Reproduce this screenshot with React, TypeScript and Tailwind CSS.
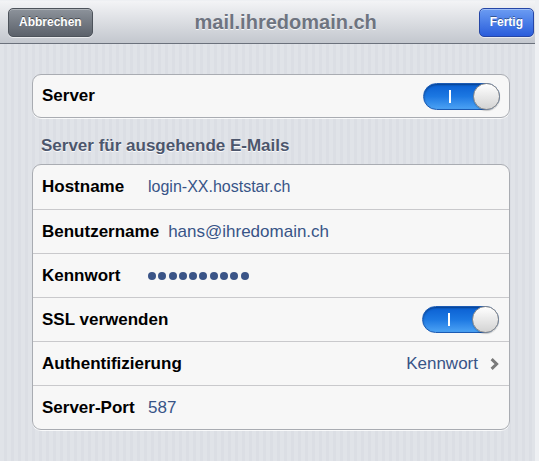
import React from 'react';

const font = "font-['Liberation_Sans',Arial,sans-serif]";

const Toggle = () => (
  <div className="flex h-[27px] w-[77px] items-center rounded-full border border-[#1b5bb4] bg-gradient-to-b from-[#0a5fd2] via-[#1c78e2] to-[#4ba2f4] pl-[25px] shadow-[inset_0_1px_2px_rgba(0,0,0,0.35)]">
    <span className="h-[13px] w-[2px] bg-white" />
    <span className="-mr-px ml-auto h-[27px] w-[27px] rounded-full border border-[#8a8a8a] bg-gradient-to-b from-[#ffffff] to-[#d3d3d3] shadow-[0_1px_1px_rgba(0,0,0,0.2)]" />
  </div>
);

const Chevron = () => (
  <svg width="9" height="12" viewBox="0 0 9 12" className="ml-[12px]">
    <path d="M1.6 1.2 L6.6 6 L1.6 10.8" fill="none" stroke="#7a7a7a" strokeWidth="3" strokeLinejoin="miter" />
  </svg>
);

const Dots = () => (
  <div className="flex gap-[2.3px]">
    {Array.from({ length: 10 }).map((_, i) => (
      <span key={i} className="h-[8px] w-[8px] rounded-full bg-[#3a5487]" />
    ))}
  </div>
);

type Row = {
  label: string;
  value?: React.ReactNode;
  valueClass?: string;
  right?: React.ReactNode;
};

const rows: Row[] = [
  { label: 'Hostname', value: 'login-XX.hoststar.ch', valueClass: 'text-[16px]' },
  { label: 'Benutzername', value: 'hans@ihredomain.ch' },
  { label: 'Kennwort', value: <Dots /> },
  { label: 'SSL verwenden', right: <Toggle /> },
  {
    label: 'Authentifizierung',
    right: (
      <div className="flex items-center">
        <span className="text-[17px] text-[#385487]">Kennwort</span>
        <Chevron />
      </div>
    ),
  },
  { label: 'Server-Port', value: '587' },
];

export default function App() {
  return (
    <div
      className={`${font} h-[461px] w-[539px] overflow-hidden border-r-4 border-t border-[#eef0f3] bg-[repeating-linear-gradient(90deg,#e0e3e8_0px,#e0e3e8_4px,#dbdee4_4px,#dbdee4_7px)]`}
    >
      {/* nav bar */}
      <div className="flex h-[43px] items-center justify-between border-b border-[#6b717c] bg-gradient-to-b from-[#f3f4f6] to-[#c3c7ce] pl-[8px] pr-[1px]">
        <button className="h-[29px] rounded-[5px] border border-[#4d535b] bg-gradient-to-b from-[#8d939b] to-[#5c626b] px-[10px] text-[12px] font-bold text-white shadow-[inset_0_1px_0_rgba(255,255,255,0.3),0_1px_0_rgba(255,255,255,0.6)] [text-shadow:0_-1px_0_rgba(0,0,0,0.45)]">
          Abbrechen
        </button>
        <h1 className="text-[20px] font-bold text-[#6e7480] [text-shadow:0_1px_0_rgba(255,255,255,0.8)]">
          mail.ihredomain.ch
        </h1>
        <button className="h-[29px] rounded-[5px] border border-[#2546a6] bg-gradient-to-b from-[#6c9cf2] to-[#2a5cdb] px-[10px] text-[12px] font-bold text-white shadow-[inset_0_1px_0_rgba(255,255,255,0.35),0_1px_0_rgba(255,255,255,0.6)] [text-shadow:0_-1px_0_rgba(0,0,0,0.4)]">
          Fertig
        </button>
      </div>

      {/* server toggle */}
      <div className="ml-[32px] mt-[30px] w-[478px] rounded-[9px] border border-[#a9acb2] bg-[#f7f7f7] shadow-[0_1px_0_rgba(255,255,255,0.8)]">
        <div className="flex h-[42px] items-center justify-between pl-[9px] pr-[9px]">
          <span className="text-[17px] font-bold text-black">Server</span>
          <Toggle />
        </div>
      </div>

      <div className="ml-[41px] mt-[17px] h-[22px] text-[17px] font-bold leading-[22px] text-[#4c566c] [text-shadow:0_1px_0_rgba(255,255,255,0.9)]">
        Server für ausgehende E-Mails
      </div>

      {/* outgoing server */}
      <div className="ml-[32px] mt-[7px] w-[478px] overflow-hidden rounded-[9px] border border-[#a9acb2] bg-[#f7f7f7] shadow-[0_1px_0_rgba(255,255,255,0.8)]">
        {rows.map((row, i) => (
          <div
            key={row.label}
            className={`flex h-[44px] items-center pl-[9px] pr-[10px] ${i > 0 ? 'border-t border-[#c9c9cc]' : 'h-[43px]'}`}
          >
            <span className="min-w-[106px] pr-[9px] text-[17px] font-bold text-black">{row.label}</span>
            {row.value && (
              <span className={`${row.valueClass ?? 'text-[17px]'} text-[#385487]`}>{row.value}</span>
            )}
            {row.right && <div className="ml-auto flex items-center">{row.right}</div>}
          </div>
        ))}
      </div>
    </div>
  );
}
